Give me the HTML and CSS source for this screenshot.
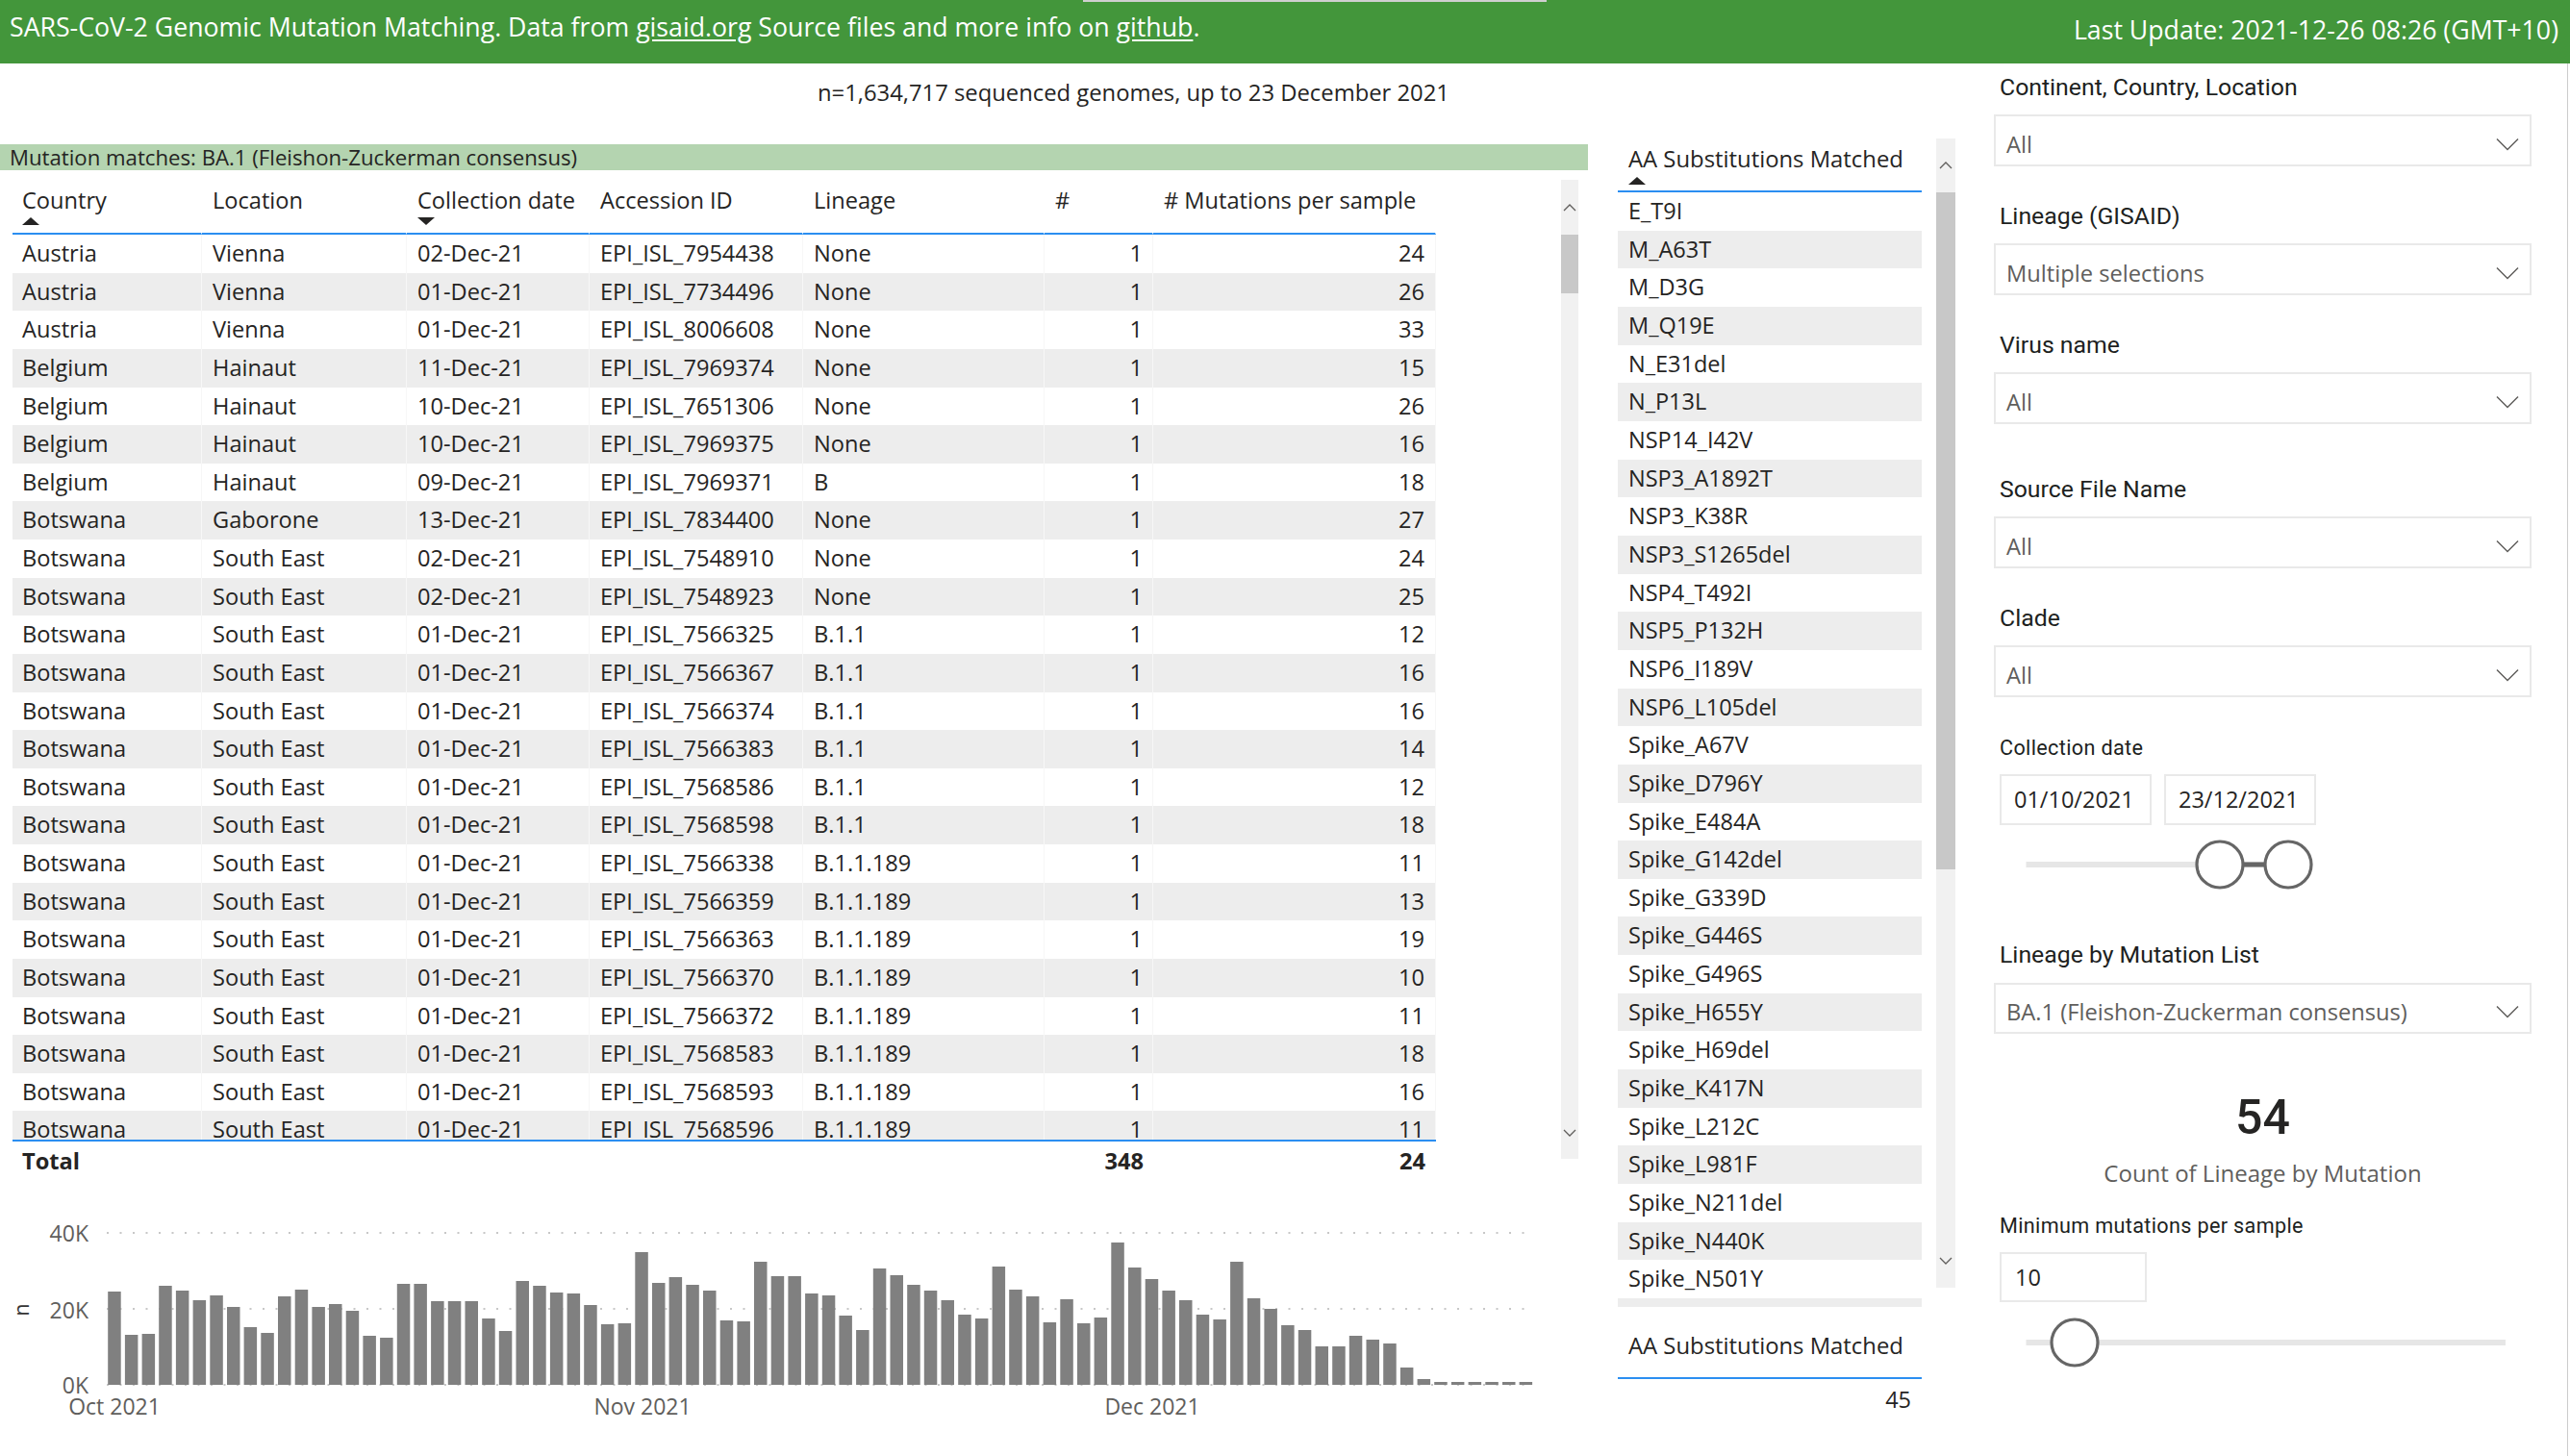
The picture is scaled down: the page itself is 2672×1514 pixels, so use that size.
FILE: index.html
```html
<!DOCTYPE html>
<html>
<head>
<meta charset="utf-8">
<title>SARS-CoV-2 Genomic Mutation Matching</title>
<link rel="stylesheet" href="styles.css">
</head>
<body>
<header class="topbar">
  <div class="topbar-tab"></div>
  <div class="title">SARS-CoV-2 Genomic Mutation Matching. Data from <a href="#">gisaid.org</a> Source files and more info on <a href="#">github</a>.</div>
  <div class="updated">Last Update: 2021-12-26 08:26 (GMT+10)</div>
</header>
<div class="main">
  <section class="left">
    <div class="subtitle">n=1,634,717 sequenced genomes, up to 23 December 2021</div>
    <div class="mbar">Mutation matches: BA.1 (Fleishon-Zuckerman consensus)</div>
    <div class="tablewrap">
      <div class="table">
        <div class="thead">
          <div class="th">Country<i class="sort-up"></i></div>
          <div class="th">Location</div>
          <div class="th">Collection date<i class="sort-down"></i></div>
          <div class="th">Accession ID</div>
          <div class="th">Lineage</div>
          <div class="th">#</div>
          <div class="th"># Mutations per sample</div>
        </div>
        <div class="tbody">
          <div class="tr"><span>Austria</span><span>Vienna</span><span>02-Dec-21</span><span>EPI_ISL_7954438</span><span>None</span><span class="num">1</span><span class="num">24</span></div>
          <div class="tr"><span>Austria</span><span>Vienna</span><span>01-Dec-21</span><span>EPI_ISL_7734496</span><span>None</span><span class="num">1</span><span class="num">26</span></div>
          <div class="tr"><span>Austria</span><span>Vienna</span><span>01-Dec-21</span><span>EPI_ISL_8006608</span><span>None</span><span class="num">1</span><span class="num">33</span></div>
          <div class="tr"><span>Belgium</span><span>Hainaut</span><span>11-Dec-21</span><span>EPI_ISL_7969374</span><span>None</span><span class="num">1</span><span class="num">15</span></div>
          <div class="tr"><span>Belgium</span><span>Hainaut</span><span>10-Dec-21</span><span>EPI_ISL_7651306</span><span>None</span><span class="num">1</span><span class="num">26</span></div>
          <div class="tr"><span>Belgium</span><span>Hainaut</span><span>10-Dec-21</span><span>EPI_ISL_7969375</span><span>None</span><span class="num">1</span><span class="num">16</span></div>
          <div class="tr"><span>Belgium</span><span>Hainaut</span><span>09-Dec-21</span><span>EPI_ISL_7969371</span><span>B</span><span class="num">1</span><span class="num">18</span></div>
          <div class="tr"><span>Botswana</span><span>Gaborone</span><span>13-Dec-21</span><span>EPI_ISL_7834400</span><span>None</span><span class="num">1</span><span class="num">27</span></div>
          <div class="tr"><span>Botswana</span><span>South East</span><span>02-Dec-21</span><span>EPI_ISL_7548910</span><span>None</span><span class="num">1</span><span class="num">24</span></div>
          <div class="tr"><span>Botswana</span><span>South East</span><span>02-Dec-21</span><span>EPI_ISL_7548923</span><span>None</span><span class="num">1</span><span class="num">25</span></div>
          <div class="tr"><span>Botswana</span><span>South East</span><span>01-Dec-21</span><span>EPI_ISL_7566325</span><span>B.1.1</span><span class="num">1</span><span class="num">12</span></div>
          <div class="tr"><span>Botswana</span><span>South East</span><span>01-Dec-21</span><span>EPI_ISL_7566367</span><span>B.1.1</span><span class="num">1</span><span class="num">16</span></div>
          <div class="tr"><span>Botswana</span><span>South East</span><span>01-Dec-21</span><span>EPI_ISL_7566374</span><span>B.1.1</span><span class="num">1</span><span class="num">16</span></div>
          <div class="tr"><span>Botswana</span><span>South East</span><span>01-Dec-21</span><span>EPI_ISL_7566383</span><span>B.1.1</span><span class="num">1</span><span class="num">14</span></div>
          <div class="tr"><span>Botswana</span><span>South East</span><span>01-Dec-21</span><span>EPI_ISL_7568586</span><span>B.1.1</span><span class="num">1</span><span class="num">12</span></div>
          <div class="tr"><span>Botswana</span><span>South East</span><span>01-Dec-21</span><span>EPI_ISL_7568598</span><span>B.1.1</span><span class="num">1</span><span class="num">18</span></div>
          <div class="tr"><span>Botswana</span><span>South East</span><span>01-Dec-21</span><span>EPI_ISL_7566338</span><span>B.1.1.189</span><span class="num">1</span><span class="num">11</span></div>
          <div class="tr"><span>Botswana</span><span>South East</span><span>01-Dec-21</span><span>EPI_ISL_7566359</span><span>B.1.1.189</span><span class="num">1</span><span class="num">13</span></div>
          <div class="tr"><span>Botswana</span><span>South East</span><span>01-Dec-21</span><span>EPI_ISL_7566363</span><span>B.1.1.189</span><span class="num">1</span><span class="num">19</span></div>
          <div class="tr"><span>Botswana</span><span>South East</span><span>01-Dec-21</span><span>EPI_ISL_7566370</span><span>B.1.1.189</span><span class="num">1</span><span class="num">10</span></div>
          <div class="tr"><span>Botswana</span><span>South East</span><span>01-Dec-21</span><span>EPI_ISL_7566372</span><span>B.1.1.189</span><span class="num">1</span><span class="num">11</span></div>
          <div class="tr"><span>Botswana</span><span>South East</span><span>01-Dec-21</span><span>EPI_ISL_7568583</span><span>B.1.1.189</span><span class="num">1</span><span class="num">18</span></div>
          <div class="tr"><span>Botswana</span><span>South East</span><span>01-Dec-21</span><span>EPI_ISL_7568593</span><span>B.1.1.189</span><span class="num">1</span><span class="num">16</span></div>
          <div class="tr"><span>Botswana</span><span>South East</span><span>01-Dec-21</span><span>EPI_ISL_7568596</span><span>B.1.1.189</span><span class="num">1</span><span class="num">11</span></div>
        </div>
        <div class="tfoot">
          <span>Total</span><span></span><span></span><span></span><span></span><span class="num">348</span><span class="num">24</span>
        </div>
      </div>
      <div class="vscroll vscroll-table">
        <div class="sb-btn sb-top"><svg width="14" height="8" viewBox="0 0 14 8"><polyline points="1,7 7,1 13,7"/></svg></div>
        <div class="sb-thumb"></div>
        <div class="sb-fill"></div>
        <div class="sb-btn sb-bottom"><svg width="14" height="8" viewBox="0 0 14 8"><polyline points="1,1 7,7 13,1"/></svg></div>
      </div>
    </div>
    <svg class="chart" width="1660" height="287" viewBox="0 0 1660 287">
      <g class="gridlines">
        <line x1="111" y1="55" x2="1594" y2="55"/>
        <line x1="111" y1="134" x2="1594" y2="134"/>
        <line x1="111" y1="213" x2="1594" y2="213"/>
      </g>
      <g class="ylabels">
        <text x="92" y="64" text-anchor="end">40K</text>
        <text x="92" y="144" text-anchor="end">20K</text>
        <text x="92" y="222" text-anchor="end">0K</text>
      </g>
      <text class="ytitle" transform="translate(30,135) rotate(-90)" text-anchor="middle">n</text>
      <g class="bars">
        <rect x="112.2" y="116" width="13.5" height="97"/>
        <rect x="129.9" y="161" width="13.5" height="52"/>
        <rect x="147.6" y="160" width="13.5" height="53"/>
        <rect x="165.2" y="110" width="13.5" height="103"/>
        <rect x="182.9" y="115" width="13.5" height="98"/>
        <rect x="200.6" y="125" width="13.5" height="88"/>
        <rect x="218.3" y="120" width="13.5" height="93"/>
        <rect x="236.0" y="132" width="13.5" height="81"/>
        <rect x="253.6" y="153" width="13.5" height="60"/>
        <rect x="271.3" y="159" width="13.5" height="54"/>
        <rect x="289.0" y="121" width="13.5" height="92"/>
        <rect x="306.7" y="114" width="13.5" height="99"/>
        <rect x="324.4" y="132" width="13.5" height="81"/>
        <rect x="342.0" y="129" width="13.5" height="84"/>
        <rect x="359.7" y="136" width="13.5" height="77"/>
        <rect x="377.4" y="162" width="13.5" height="51"/>
        <rect x="395.1" y="164" width="13.5" height="49"/>
        <rect x="412.8" y="108" width="13.5" height="105"/>
        <rect x="430.4" y="108" width="13.5" height="105"/>
        <rect x="448.1" y="126" width="13.5" height="87"/>
        <rect x="465.8" y="126" width="13.5" height="87"/>
        <rect x="483.5" y="126" width="13.5" height="87"/>
        <rect x="501.2" y="144" width="13.5" height="69"/>
        <rect x="518.8" y="157" width="13.5" height="56"/>
        <rect x="536.5" y="105" width="13.5" height="108"/>
        <rect x="554.2" y="110" width="13.5" height="103"/>
        <rect x="571.9" y="117" width="13.5" height="96"/>
        <rect x="589.6" y="118" width="13.5" height="95"/>
        <rect x="607.2" y="130" width="13.5" height="83"/>
        <rect x="624.9" y="150" width="13.5" height="63"/>
        <rect x="642.6" y="149" width="13.5" height="64"/>
        <rect x="660.3" y="75" width="13.5" height="138"/>
        <rect x="678.0" y="107" width="13.5" height="106"/>
        <rect x="695.6" y="101" width="13.5" height="112"/>
        <rect x="713.3" y="109" width="13.5" height="104"/>
        <rect x="731.0" y="115" width="13.5" height="98"/>
        <rect x="748.7" y="146" width="13.5" height="67"/>
        <rect x="766.4" y="147" width="13.5" height="66"/>
        <rect x="784.0" y="85" width="13.5" height="128"/>
        <rect x="801.7" y="100" width="13.5" height="113"/>
        <rect x="819.4" y="100" width="13.5" height="113"/>
        <rect x="837.1" y="118" width="13.5" height="95"/>
        <rect x="854.8" y="120" width="13.5" height="93"/>
        <rect x="872.4" y="141" width="13.5" height="72"/>
        <rect x="890.1" y="156" width="13.5" height="57"/>
        <rect x="907.8" y="92" width="13.5" height="121"/>
        <rect x="925.5" y="99" width="13.5" height="114"/>
        <rect x="943.2" y="109" width="13.5" height="104"/>
        <rect x="960.8" y="115" width="13.5" height="98"/>
        <rect x="978.5" y="125" width="13.5" height="88"/>
        <rect x="996.2" y="140" width="13.5" height="73"/>
        <rect x="1013.9" y="144" width="13.5" height="69"/>
        <rect x="1031.6" y="90" width="13.5" height="123"/>
        <rect x="1049.2" y="114" width="13.5" height="99"/>
        <rect x="1066.9" y="121" width="13.5" height="92"/>
        <rect x="1084.6" y="148" width="13.5" height="65"/>
        <rect x="1102.3" y="124" width="13.5" height="89"/>
        <rect x="1120.0" y="149" width="13.5" height="64"/>
        <rect x="1137.6" y="143" width="13.5" height="70"/>
        <rect x="1155.3" y="65" width="13.5" height="148"/>
        <rect x="1173.0" y="91" width="13.5" height="122"/>
        <rect x="1190.7" y="103" width="13.5" height="110"/>
        <rect x="1208.4" y="115" width="13.5" height="98"/>
        <rect x="1226.0" y="125" width="13.5" height="88"/>
        <rect x="1243.7" y="140" width="13.5" height="73"/>
        <rect x="1261.4" y="145" width="13.5" height="68"/>
        <rect x="1279.1" y="85" width="13.5" height="128"/>
        <rect x="1296.8" y="123" width="13.5" height="90"/>
        <rect x="1314.4" y="134" width="13.5" height="79"/>
        <rect x="1332.1" y="151" width="13.5" height="62"/>
        <rect x="1349.8" y="156" width="13.5" height="57"/>
        <rect x="1367.5" y="173" width="13.5" height="40"/>
        <rect x="1385.2" y="173" width="13.5" height="40"/>
        <rect x="1402.8" y="162" width="13.5" height="51"/>
        <rect x="1420.5" y="166" width="13.5" height="47"/>
        <rect x="1438.2" y="170" width="13.5" height="43"/>
        <rect x="1455.9" y="195" width="13.5" height="18"/>
        <rect x="1473.6" y="207" width="13.5" height="6"/>
        <rect x="1491.2" y="210" width="13.5" height="3"/>
        <rect x="1508.9" y="210" width="13.5" height="3"/>
        <rect x="1526.6" y="210" width="13.5" height="3"/>
        <rect x="1544.3" y="210" width="13.5" height="3"/>
        <rect x="1562.0" y="210" width="13.5" height="3"/>
        <rect x="1579.6" y="210" width="13.5" height="3"/>
      </g>
      <g class="xlabels">
        <text x="119" y="244" text-anchor="middle">Oct 2021</text>
        <text x="668" y="244" text-anchor="middle">Nov 2021</text>
        <text x="1198" y="244" text-anchor="middle">Dec 2021</text>
      </g>
    </svg>
  </section>

  <section class="aa">
    <div class="aalist">
      <div class="aa-head">AA Substitutions Matched<i class="sort-up"></i></div>
      <div class="aa-body">
        <div class="aa-row">E_T9I</div>
        <div class="aa-row">M_A63T</div>
        <div class="aa-row">M_D3G</div>
        <div class="aa-row">M_Q19E</div>
        <div class="aa-row">N_E31del</div>
        <div class="aa-row">N_P13L</div>
        <div class="aa-row">NSP14_I42V</div>
        <div class="aa-row">NSP3_A1892T</div>
        <div class="aa-row">NSP3_K38R</div>
        <div class="aa-row">NSP3_S1265del</div>
        <div class="aa-row">NSP4_T492I</div>
        <div class="aa-row">NSP5_P132H</div>
        <div class="aa-row">NSP6_I189V</div>
        <div class="aa-row">NSP6_L105del</div>
        <div class="aa-row">Spike_A67V</div>
        <div class="aa-row">Spike_D796Y</div>
        <div class="aa-row">Spike_E484A</div>
        <div class="aa-row">Spike_G142del</div>
        <div class="aa-row">Spike_G339D</div>
        <div class="aa-row">Spike_G446S</div>
        <div class="aa-row">Spike_G496S</div>
        <div class="aa-row">Spike_H655Y</div>
        <div class="aa-row">Spike_H69del</div>
        <div class="aa-row">Spike_K417N</div>
        <div class="aa-row">Spike_L212C</div>
        <div class="aa-row">Spike_L981F</div>
        <div class="aa-row">Spike_N211del</div>
        <div class="aa-row">Spike_N440K</div>
        <div class="aa-row">Spike_N501Y</div>
        <div class="aa-row">Spike_N679K</div>
      </div>
      <div class="aa-foot">AA Substitutions Matched</div>
      <div class="aa-total">45</div>
    </div>
    <div class="vscroll vscroll-aa">
      <div class="sb-btn sb-top"><svg width="14" height="8" viewBox="0 0 14 8"><polyline points="1,7 7,1 13,7"/></svg></div>
      <div class="sb-thumb"></div>
      <div class="sb-fill"></div>
      <div class="sb-btn sb-bottom"><svg width="14" height="8" viewBox="0 0 14 8"><polyline points="1,1 7,7 13,1"/></svg></div>
    </div>
  </section>

  <aside class="right">
    <div class="label g1">Continent, Country, Location</div>
    <div class="dropdown"><span>All</span><svg class="chev" width="24" height="14" viewBox="0 0 24 14"><polyline points="1,1.5 12,12.5 23,1.5"/></svg></div>

    <div class="label g2">Lineage (GISAID)</div>
    <div class="dropdown"><span>Multiple selections</span><svg class="chev" width="24" height="14" viewBox="0 0 24 14"><polyline points="1,1.5 12,12.5 23,1.5"/></svg></div>

    <div class="label g2">Virus name</div>
    <div class="dropdown"><span>All</span><svg class="chev" width="24" height="14" viewBox="0 0 24 14"><polyline points="1,1.5 12,12.5 23,1.5"/></svg></div>

    <div class="label g4">Source File Name</div>
    <div class="dropdown"><span>All</span><svg class="chev" width="24" height="14" viewBox="0 0 24 14"><polyline points="1,1.5 12,12.5 23,1.5"/></svg></div>

    <div class="label g2">Clade</div>
    <div class="dropdown"><span>All</span><svg class="chev" width="24" height="14" viewBox="0 0 24 14"><polyline points="1,1.5 12,12.5 23,1.5"/></svg></div>

    <div class="label small g6">Collection date</div>
    <div class="dates">
      <div class="datebox">01/10/2021</div>
      <div class="datebox">23/12/2021</div>
    </div>
    <svg class="slider s1" width="559" height="60" viewBox="0 0 559 60">
      <line class="track" x1="33.5" y1="30" x2="306" y2="30"/>
      <line class="range" x1="235" y1="30" x2="306" y2="30"/>
      <circle cx="235" cy="30" r="24"/>
      <circle cx="306" cy="30" r="24"/>
    </svg>

    <div class="label g7">Lineage by Mutation List</div>
    <div class="dropdown dd-lineage"><span>BA.1 (Fleishon-Zuckerman consensus)</span><svg class="chev" width="24" height="14" viewBox="0 0 24 14"><polyline points="1,1.5 12,12.5 23,1.5"/></svg></div>

    <div class="kpi">54</div>
    <div class="kpi-label">Count of Lineage by Mutation</div>

    <div class="label small g8">Minimum mutations per sample</div>
    <div class="numbox">10</div>
    <svg class="slider s2" width="559" height="60" viewBox="0 0 559 60">
      <line class="track" x1="33.5" y1="30" x2="532" y2="30"/>
      <circle cx="84" cy="30" r="24"/>
    </svg>
  </aside>
</div>
</body>
</html>
```

FILE: styles.css
```css
* { box-sizing: border-box; }
html, body { margin: 0; padding: 0; }
body {
  width: 2672px;
  height: 1514px;
  overflow: hidden;
  background: #fff;
  font-family: "Open Sans", "Segoe UI", sans-serif;
  color: #252423;
}

/* Top bar */
.topbar {
  position: relative;
  height: 66px;
  background: #43963b;
  color: #fff;
  display: flex;
  justify-content: space-between;
  align-items: flex-start;
  padding: 0 12px 0 10px;
  font-size: 26.7px;
  line-height: 30px;
  white-space: nowrap;
}
.topbar-tab {
  position: absolute;
  left: 1126px;
  top: 0;
  width: 482px;
  height: 2px;
  background: #cfcfcf;
}
.title { padding-top: 13px; }
.title a { color: #fff; text-decoration: underline; text-underline-offset: 3px; }
.updated { padding-top: 16px; }

.main { display: flex; height: 1448px; }

/* Left area */
.left { width: 1660px; flex: none; }
.subtitle {
  height: 84px;
  padding: 15px 0 0 850px;
  font-size: 23.8px;
  line-height: 30px;
  white-space: nowrap;
}
.mbar {
  width: 1651px;
  height: 27px;
  background: #b4d4b0;
  font-size: 22.2px;
  line-height: 27px;
  padding-left: 10px;
  white-space: nowrap;
  color: #252423;
}

.tablewrap { display: flex; align-items: flex-start; }
.table { margin-left: 13px; width: 1480px; flex: none; font-size: 23.6px; }
.thead, .tr, .tfoot {
  display: grid;
  grid-template-columns: 197px 213px 190px 222px 251px 113px 294px;
}
.thead { height: 67px; }
.th {
  padding: 16px 0 0 11px;
  line-height: 30px;
  border-bottom: 2px solid #2b8ef1;
  border-right: 1px solid #fff;
  white-space: nowrap;
}
.th:first-child { padding-left: 10px; }
.th i { display: block; width: 0; height: 0; margin-top: 3px; }
.sort-up {
  border-left: 9px solid transparent;
  border-right: 9px solid transparent;
  border-bottom: 8px solid #252423;
}
.sort-down {
  border-left: 9px solid transparent;
  border-right: 9px solid transparent;
  border-top: 8px solid #252423;
}
.tbody {
  height: 941px;
  overflow: hidden;
  border-bottom: 2px solid #2b8ef1;
  box-sizing: content-box;
}
.tr { height: 39.64px; line-height: 39.64px; }
.tr:nth-child(even) { background: #ededed; }
.tr span {
  padding-left: 11px;
  white-space: nowrap;
  overflow: hidden;
  border-right: 1px solid #f7f7f7;
}
.tr span:first-child, .tfoot span:first-child { padding-left: 10px; }
.tr .num, .tfoot .num { text-align: right; padding-right: 10px; padding-left: 0; }
.tr .num:last-child, .tfoot .num:last-child { padding-right: 11px; }
.tfoot {
  height: 40px;
  line-height: 30px;
  padding-top: 5px;
  font-weight: 700;
}
.tfoot span { padding-left: 11px; }

/* Scrollbars */
.vscroll {
  flex: none;
  display: flex;
  flex-direction: column;
  background: #f1f1f1;
}
.sb-btn { display: flex; align-items: center; justify-content: center; flex: none; }
.sb-btn polyline { fill: none; stroke: #605e5c; stroke-width: 1.3; }
.sb-thumb { background: #c8c8c8; flex: none; }
.sb-fill { flex: 1; }
.vscroll-table { margin: 10px 0 0 130px; width: 18px; height: 1018px; }
.vscroll-table .sb-top { height: 57px; }
.vscroll-table .sb-thumb { height: 61px; }
.vscroll-table .sb-bottom { height: 54px; }

/* Chart */
.chart { display: block; }
.gridlines line { stroke: #c8c8c8; stroke-width: 2; stroke-dasharray: 2 11.5; }
.bars rect { fill: #808080; }
.ylabels text, .xlabels text { font-family: "Open Sans", sans-serif; font-size: 23px; fill: #605e5c; }
.ytitle { font-family: "Open Sans", sans-serif; font-size: 21px; fill: #333; }

/* AA list */
.aa { width: 385px; flex: none; display: flex; align-items: flex-start; padding-top: 78px; }
.aalist { width: 316px; margin-left: 22px; flex: none; font-size: 23.5px; }
.aa-head {
  padding: 6px 0 6px 11px;
  line-height: 30px;
  font-size: 23.85px;
  border-bottom: 2px solid #2b8ef1;
  white-space: nowrap;
}
.aa-head i { display: block; width: 0; height: 0; margin-top: 4px; }
.aa-body { height: 1159px; overflow: hidden; }
.aa-row { height: 39.66px; line-height: 39.66px; padding-left: 11px; white-space: nowrap; }
.aa-row:nth-child(even) { background: #ededed; }
.aa-foot {
  margin-top: 25px;
  padding: 0 0 18px 11px;
  line-height: 30px;
  font-size: 23.85px;
  border-bottom: 2px solid #2b8ef1;
  white-space: nowrap;
}
.aa-total { margin-top: 6px; line-height: 30px; text-align: right; padding-right: 11px; }
.vscroll-aa { margin-left: 15px; width: 20px; height: 1195px; }
.vscroll-aa .sb-top { height: 56px; }
.vscroll-aa .sb-thumb { height: 704px; }
.vscroll-aa .sb-bottom { height: 56px; }

/* Right slicers */
.right {
  flex: 1;
  display: flex;
  flex-direction: column;
  align-items: flex-start;
  padding-left: 28px;
  border-right: 1px solid #cccccc;
  margin-right: 2px;
}
.label {
  font-family: Roboto, "Open Sans", sans-serif;
  font-size: 24.8px;
  line-height: 30px;
  color: #201f1e;
  margin-left: 6px;
  white-space: nowrap;
}
.label.small { font-size: 21.6px; letter-spacing: 0.35px; }
.g1 { margin-top: 10px; }
.g2 { margin-top: 37px; }
.g4 { margin-top: 53px; }
.g6 { margin-top: 38px; }
.g7 { margin-top: 49px; }
.g8 { margin-top: 25px; }
.dropdown {
  width: 559px;
  height: 54px;
  margin-top: 13px;
  border: 2px solid #e9e9e9;
  display: flex;
  justify-content: space-between;
  align-items: flex-start;
  padding: 14px 11px 0 11px;
  font-size: 23.7px;
  line-height: 30px;
  color: #605e5c;
}
.dd-lineage { margin-top: 14px; height: 53px; padding-top: 13px; }
.chev { margin-top: 8px; flex: none; }
.chev polyline { fill: none; stroke: #605e5c; stroke-width: 1.5; }
.dates { display: flex; gap: 13px; margin: 12px 0 0 6px; }
.datebox {
  width: 158px;
  height: 53px;
  border: 2px solid #e9e9e9;
  padding: 9px 0 0 13px;
  font-size: 23.5px;
  line-height: 30px;
  color: #252423;
}
.slider { display: block; flex: none; }
.s1 { margin-top: 11px; }
.s2 { margin-top: 12px; }
.slider .track { stroke: #e6e6e6; stroke-width: 6; }
.slider .range { stroke: #666; stroke-width: 5; }
.slider circle { fill: #fff; stroke: #666; stroke-width: 3.2; }
.kpi {
  margin-top: 57px;
  width: 559px;
  text-align: center;
  font-family: Roboto, sans-serif;
  font-weight: 500;
  font-size: 50px;
  line-height: 60px;
  color: #252423;
}
.kpi-label {
  width: 559px;
  margin-top: 13px;
  text-align: center;
  font-size: 24px;
  line-height: 30px;
  color: #605e5c;
}
.numbox {
  margin: 12px 0 0 6px;
  width: 153px;
  height: 52px;
  border: 2px solid #e9e9e9;
  padding: 9px 0 0 14px;
  font-size: 23.5px;
  line-height: 30px;
  color: #252423;
}
```
